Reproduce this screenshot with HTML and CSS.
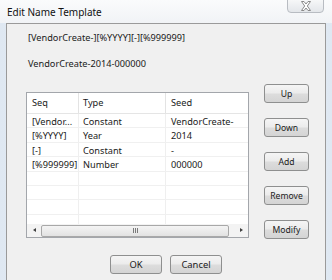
FILE: index.html
```html
<!DOCTYPE html>
<html lang="en">
<head>
    <meta charset="UTF-8">
    <title>Edit Name Template</title>
    <link rel="stylesheet" href="styles.css">
</head>
<body>
<div class="dialog">
    <div class="titlebar">
        <span class="title">Edit Name Template</span>
        <div class="close">
            <svg width="12" height="10" viewBox="0 0 12 10">
                <path d="M1.5 0.5 L4 0.5 L6 3 L8 0.5 L10.5 0.5 L7.3 5 L10.5 9.5 L8 9.5 L6 7 L4 9.5 L1.5 9.5 L4.7 5 Z" fill="#fff" stroke="#8a8a8a" stroke-width="1" stroke-linejoin="round"/>
            </svg>
        </div>
    </div>

    <div class="client">
        <div class="template">[VendorCreate-][%YYYY][-][%999999]</div>
        <div class="preview">VendorCreate-2014-000000</div>

        <div class="main">
            <div class="list">
                <div class="list-view">
                    <div class="row header">
                        <div class="cell seq">Seq</div>
                        <div class="cell type">Type</div>
                        <div class="cell seed">Seed</div>
                    </div>
                    <div class="row">
                        <div class="cell seq">[Vendor...</div>
                        <div class="cell type">Constant</div>
                        <div class="cell seed">VendorCreate-</div>
                    </div>
                    <div class="row">
                        <div class="cell seq">[%YYYY]</div>
                        <div class="cell type">Year</div>
                        <div class="cell seed">2014</div>
                    </div>
                    <div class="row">
                        <div class="cell seq">[-]</div>
                        <div class="cell type">Constant</div>
                        <div class="cell seed">-</div>
                    </div>
                    <div class="row">
                        <div class="cell seq">[%999999]</div>
                        <div class="cell type">Number</div>
                        <div class="cell seed">000000</div>
                    </div>
                    <div class="row"><div class="cell seq"></div><div class="cell type"></div><div class="cell seed"></div></div>
                    <div class="row"><div class="cell seq"></div><div class="cell type"></div><div class="cell seed"></div></div>
                    <div class="row"><div class="cell seq"></div><div class="cell type"></div><div class="cell seed"></div></div>
                    <div class="row"><div class="cell seq"></div><div class="cell type"></div><div class="cell seed"></div></div>
                </div>
                <div class="hscroll">
                    <div class="arrow left"></div>
                    <div class="track">
                        <div class="thumb"><span class="grip"></span></div>
                    </div>
                    <div class="arrow right"></div>
                </div>
            </div>

            <div class="side-buttons">
                <button class="btn">Up</button>
                <button class="btn">Down</button>
                <button class="btn">Add</button>
                <button class="btn">Remove</button>
                <button class="btn">Modify</button>
            </div>
        </div>

        <div class="footer">
            <button class="btn wide">OK</button>
            <button class="btn wide">Cancel</button>
        </div>
    </div>
</div>
</body>
</html>
```

FILE: styles.css
```css
body {
    margin: 0;
    padding: 0;
    background-color: #e6edf5;
    font-family: "Noto Sans", "Open Sans", sans-serif;
    color: #1a1a1a;
}

.dialog {
    width: 332px;
    height: 280px;
    overflow: hidden;
    background: linear-gradient(to right, #dfe8f2, #eef3f8 40%, #eef3f8 60%, #dfe8f2);
}

.titlebar {
    height: 23px;
    position: relative;
    background: linear-gradient(to bottom, #fafbfc, #f1f3f6);
}

.title {
    display: block;
    padding: 5px 0 0 7px;
    font-size: 10px;
    line-height: 14px;
    color: #111;
}

.close {
    position: absolute;
    top: -1px;
    left: 287px;
    width: 37px;
    height: 14px;
    box-sizing: border-box;
    border: 1px solid #b8bcc2;
    border-radius: 0 0 4px 4px;
    background: linear-gradient(to bottom, #f6f7f8, #e3e6ea);
    display: flex;
    align-items: center;
    justify-content: center;
}

.client {
    margin-left: 6px;
    width: 320px;
    height: 257px;
    box-sizing: border-box;
    border: 1px solid #9a9a9a;
    border-bottom: none;
    background-color: #f0f0f0;
    padding: 7px 0 0 19px;
    font-size: 9.2px;
}

.template {
    padding-left: 2px;
    line-height: 14px;
}

.preview {
    padding-left: 2px;
    margin-top: 12px;
    line-height: 14px;
}

.main {
    display: flex;
    margin-top: 13px;
}

.list {
    margin-top: 8px;
    width: 223px;
    height: 146px;
    box-sizing: border-box;
    border: 1px solid #a3a6ab;
    background-color: #fff;
    display: flex;
    flex-direction: column;
    overflow: hidden;
}

.list-view {
    flex: 1;
    overflow: hidden;
}

.row {
    display: flex;
    height: 14.4px;
    line-height: 15px;
    border-bottom: 1px solid #f0f0f0;
    box-sizing: border-box;
}

.row.header {
    height: 21px;
    line-height: 20px;
    border-bottom: 1px solid #e5e5e5;
}

.cell {
    flex: none;
    box-sizing: border-box;
    border-right: 1px solid #efefef;
    white-space: nowrap;
    overflow: hidden;
}

.header .cell {
    border-right-color: #e3e3e3;
}

.seq {
    width: 52px;
    padding-left: 5px;
}

.type {
    width: 87px;
    padding-left: 4px;
}

.seed {
    width: 120px;
    padding-left: 5px;
}

.hscroll {
    height: 13px;
    display: flex;
    align-items: center;
    background-color: #f3f3f3;
}

.arrow {
    width: 14px;
    height: 13px;
    position: relative;
}

.arrow::after {
    content: "";
    position: absolute;
    top: 4px;
    border-top: 2.5px solid transparent;
    border-bottom: 2.5px solid transparent;
}

.arrow.left::after {
    left: 6px;
    border-right: 3px solid #404040;
}

.arrow.right::after {
    left: 6px;
    border-left: 3px solid #404040;
}

.track {
    flex: 1;
    height: 13px;
    display: flex;
    align-items: center;
}

.thumb {
    width: 188px;
    height: 12px;
    box-sizing: border-box;
    border: 1px solid #a8a8a8;
    border-radius: 2px;
    background: linear-gradient(to bottom, #f4f4f4, #e2e2e2);
    display: flex;
    align-items: center;
    justify-content: center;
}

.grip {
    width: 5px;
    height: 5px;
    background: repeating-linear-gradient(to right, #7a7a7a 0, #7a7a7a 1px, transparent 1px, transparent 2px);
}

.side-buttons {
    margin-left: 15px;
    display: flex;
    flex-direction: column;
    gap: 15px;
}

.btn {
    width: 45px;
    height: 19px;
    padding: 0;
    box-sizing: border-box;
    border: 1px solid #8e8f8f;
    border-radius: 3px;
    background: linear-gradient(to bottom, #f5f5f5, #ececec 45%, #dcdcdc 55%, #d4d4d4);
    font-family: "Noto Sans", "Open Sans", sans-serif;
    font-size: 8.6px;
    color: #1a1a1a;
}

.footer {
    display: flex;
    gap: 8px;
    margin-top: 16px;
    padding-left: 84px;
}

.btn.wide {
    width: 52px;
    font-size: 9.4px;
}
```
